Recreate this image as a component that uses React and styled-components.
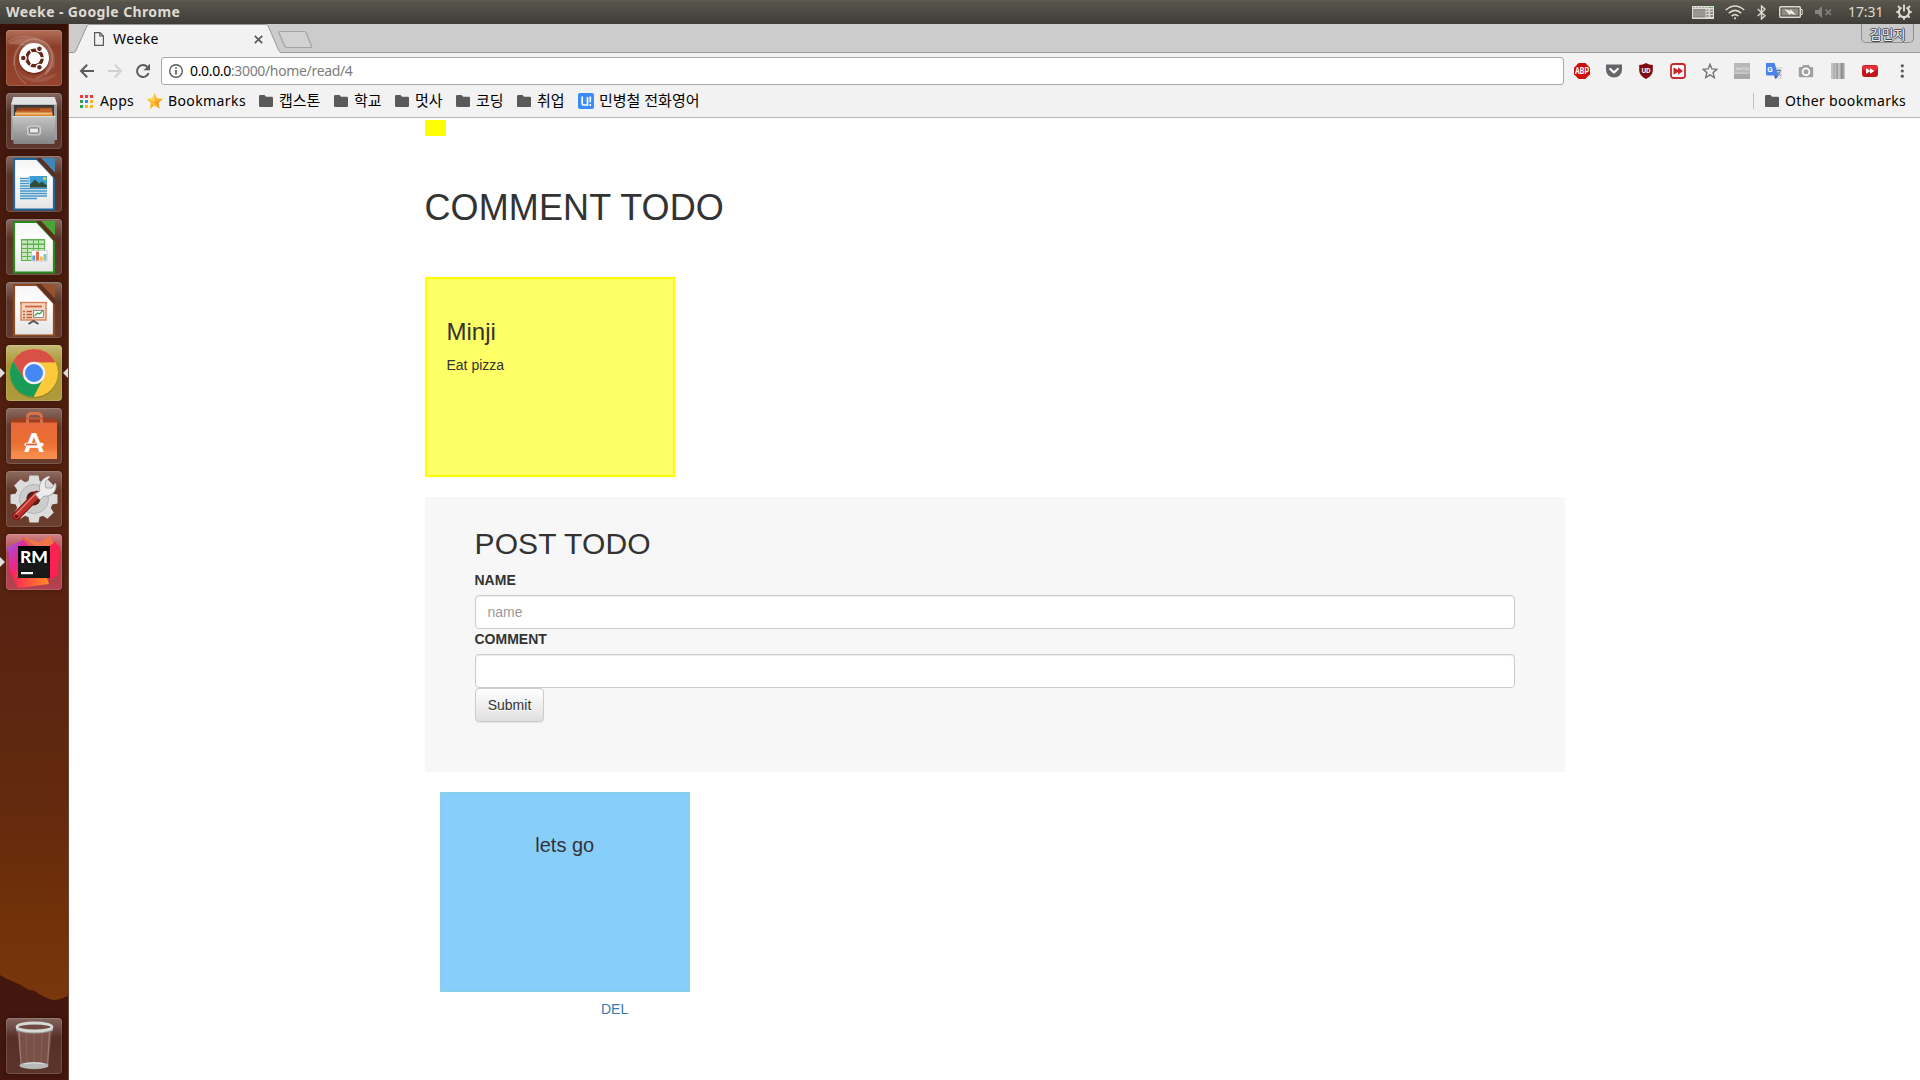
import React from "react";
import styled, { createGlobalStyle } from "styled-components";

const UI = `"Noto Sans", "Noto Sans CJK KR", sans-serif`;
const BODY = `"Liberation Sans", "Noto Sans CJK KR", sans-serif`;

const GlobalStyle = createGlobalStyle`
  *, *::before, *::after { box-sizing: border-box; }
  html, body { margin: 0; padding: 0; overflow: hidden; background: #fff; }
  svg { display: block; flex: none; }
`;

/* ---------- Desktop frame ---------- */

const Desktop = styled.div`
  display: flex;
  flex-direction: column;
  width: 1920px;
  height: 1080px;
  overflow: hidden;
  font-family: ${UI};
`;

const MenuBar = styled.header`
  display: flex;
  align-items: center;
  justify-content: space-between;
  flex: none;
  height: 24px;
  padding: 0 8px 0 6px;
  background: linear-gradient(#5f5d50 0, #56544b 12%, #3e3d38 100%);
  color: #dfdbd2;
`;

const WindowTitle = styled.span`
  font-size: 14px;
  font-weight: 700;
  line-height: 24px;
  letter-spacing: 0.38px;
  white-space: nowrap;
`;

const Indicators = styled.div`
  display: flex;
  align-items: center;
`;

const Indicator = styled.span`
  display: flex;
  justify-content: center;
  width: ${(p) => p.$w}px;
  margin-right: ${(p) => p.$after || 0}px;
`;

const Clock = styled.span`
  width: 35px;
  margin-right: 13px;
  font-size: 14px;
  line-height: 24px;
  letter-spacing: -0.1px;
  white-space: nowrap;
`;

const Workspace = styled.div`
  display: flex;
  flex: 1;
  min-height: 0;
`;

/* ---------- Launcher ---------- */

const Launcher = styled.nav`
  position: relative;
  display: flex;
  flex-direction: column;
  gap: 7px;
  flex: none;
  width: 69px;
  padding: 6px 0 6px 6px;
  border-right: 1px solid #6b4434;
  background: linear-gradient(#351109 0, #43190d 3%, #461a0e 15%, #52200f 40%, #5a2411 60%, #642a0f 74%, #703109 84%, #7a370c 93%);
`;

const Hills = styled.svg`
  position: absolute;
  left: 0;
  bottom: 0;
`;

const Tile = styled.div`
  position: relative;
  flex: none;
  width: 56px;
  height: 56px;
  margin-top: ${(p) => (p.$last ? "auto" : "0")};
  border-radius: 4px;
  background: ${(p) =>
    p.$bg || "linear-gradient(rgba(255,255,255,.34), rgba(255,255,255,.1) 35%, rgba(255,255,255,.13))"};
  box-shadow: inset 0 0 0 1px rgba(255, 255, 255, 0.14), 0 0 4px rgba(0, 0, 0, 0.35);
`;

const Pip = styled.i`
  position: absolute;
  top: 23px;
  ${(p) => (p.$right ? "right: -6px;" : "left: -6px;")}
  border: 5px solid transparent;
  ${(p) =>
    p.$right
      ? "border-left-width: 0; border-right-color: #ddd;"
      : "border-right-width: 0; border-left-color: #ddd;"}
`;

/* ---------- Browser chrome ---------- */

const Browser = styled.main`
  display: flex;
  flex-direction: column;
  flex: 1;
  min-width: 0;
  background: #fff;
`;

const TabStrip = styled.div`
  display: flex;
  justify-content: space-between;
  flex: none;
  height: 29px;
  background: linear-gradient(#cccccc 28px, #9c9c9c 28px);
`;

const Tabs = styled.div`
  display: flex;
`;

const Tab = styled.div`
  position: relative;
  display: flex;
  align-items: center;
  width: 209px;
  height: 29px;
  padding: 1px 15px 0 24px;
`;

const TabShape = styled.svg`
  position: absolute;
  left: 0;
  top: 0;
`;

const TabTitle = styled.span`
  position: relative;
  flex: 1;
  padding-left: 8px;
  font-size: 14px;
  line-height: 28px;
  letter-spacing: 0.4px;
  color: #000;
`;

const Above = styled.span`
  position: relative;
  display: flex;
`;

const ProfileBadge = styled.div`
  width: 53px;
  height: 19px;
  margin-right: 6px;
  border: 1px solid #8f8f8f;
  border-top: 0;
  border-radius: 0 0 5px 5px;
  background: #c9c9c9;
  font-family: "Noto Sans CJK KR", sans-serif;
  font-size: 13px;
  line-height: 20px;
  text-align: center;
  color: #f4f4f4;
  text-shadow: 1px 0 #4b4b4b, -1px 0 #4b4b4b, 0 1px #4b4b4b, 0 -1px #4b4b4b;
`;

const Toolbar = styled.div`
  display: flex;
  align-items: center;
  flex: none;
  height: 36px;
  padding: 0 10px;
  background: #f2f2f2;
`;

const NavButtons = styled.div`
  display: flex;
  gap: 12px;
  margin-right: 10px;
`;

const Omnibox = styled.div`
  display: flex;
  align-items: center;
  width: 1403px;
  height: 28px;
  margin-right: 10px;
  padding-left: 6px;
  border: 1px solid #a8a8a8;
  border-radius: 3px;
  background: #fff;
`;

const Address = styled.span`
  padding-left: 6px;
  font-size: 14px;
  line-height: 26px;
  letter-spacing: -0.34px;
  color: #7d7d7d;
  white-space: nowrap;
  b { font-weight: 400; color: #000; }
`;

const Extensions = styled.div`
  display: flex;
  gap: 16px;
`;

const BookmarkBar = styled.div`
  display: flex;
  align-items: center;
  flex: none;
  height: 29px;
  padding: 0 14px 4px 11px;
  border-bottom: 1px solid #b6b6b6;
  background: #f2f2f2;
`;

const Bookmark = styled.div`
  display: flex;
  align-items: center;
  gap: ${(p) => p.$gap || 6}px;
  margin-right: ${(p) => (p.$last ? 0 : 14)}px;
`;

const BookmarkLabel = styled.span`
  width: ${(p) => p.$w}px;
  padding-bottom: ${(p) => (p.$ko ? 2 : 0)}px;
  font-size: ${(p) => (p.$ko ? 15 : 14)}px;
  line-height: 24px;
  letter-spacing: ${(p) => p.$track || 0}px;
  color: #000;
  white-space: nowrap;
`;

const OtherBookmarks = styled.div`
  display: flex;
  align-items: center;
  height: 16px;
  margin-left: auto;
  padding-left: 11px;
  border-left: 1px solid #c2c2c2;
`;

/* ---------- Page ---------- */

const Page = styled.section`
  flex: 1;
  width: 1140px;
  margin-left: 356px;
  padding-top: 2px;
  font-family: ${BODY};
  font-size: 14px;
  line-height: 20px;
  color: #333;
`;

const Marker = styled.div`
  width: 21px;
  height: 16px;
  background: #ff0;
`;

const Title = styled.h1`
  margin: 52px 0 49px -0.5px;
  font-size: 36px;
  font-weight: 400;
  line-height: 40px;
  letter-spacing: 0.12px;
`;

const Note = styled.article`
  width: 250px;
  height: 200px;
  margin-left: ${(p) => (p.$blue ? 15 : 0)}px;
  padding: 40px 20px 40px 19.5px;
  border: 2px solid ${(p) => (p.$blue ? "#87ceeb" : "#ff0")};
  background: ${(p) => (p.$blue ? "#87cefa" : "#ff6")};
  text-align: ${(p) => (p.$blue ? "center" : "left")};
`;

const NoteTitle = styled.h3`
  margin: 0 0 10px;
  font-size: 24px;
  font-weight: 400;
  line-height: 26px;
`;

const NoteText = styled.p`
  margin: 0;
  font-size: ${(p) => (p.$large ? 20 : 14)}px;
  line-height: ${(p) => (p.$large ? 22 : 20)}px;
`;

const PostForm = styled.form`
  display: flex;
  flex-direction: column;
  align-items: flex-start;
  width: 1140px;
  height: 275px;
  margin: 20px 0;
  padding: 30px 50px;
  background: #f7f7f7;
`;

const FormTitle = styled.h2`
  margin: 0 0 10px -0.5px;
  font-size: 30px;
  font-weight: 400;
  line-height: 33px;
  letter-spacing: 0.12px;
`;

const Label = styled.label`
  margin: 0 0 5px -0.5px;
  font-weight: 700;
  line-height: 20px;
`;

const Field = styled.input`
  width: 1040px;
  height: 34px;
  padding: 6px 12px 6px 11.5px;
  border: 1px solid #ccc;
  border-radius: 4px;
  background: #fff;
  box-shadow: inset 0 1px 1px rgba(0, 0, 0, 0.075);
  font: 14px/20px ${BODY};
  color: #555;
  &::placeholder { color: #999; opacity: 1; }
`;

const Submit = styled.button`
  height: 34px;
  width: 69px;
  padding: 6px 0;
  border: 1px solid #ccc;
  border-radius: 4px;
  background: linear-gradient(#fff, #e0e0e0);
  box-shadow: inset 0 1px 0 rgba(255, 255, 255, 0.15), 0 1px 1px rgba(0, 0, 0, 0.075);
  font: 14px/20px ${BODY};
  color: #333;
  text-shadow: 0 1px 0 #fff;
`;

const DeleteLink = styled.a`
  display: block;
  margin: 7px 0 0 176px;
  color: #337ab7;
`;

/* ---------- Launcher drawings ---------- */

const Art = (props) => <svg width="56" height="56" viewBox="0 0 56 56" {...props} />;

const UbuntuArt = () => (
  <Art>
    <g fill="none" stroke="#fff" strokeOpacity=".2" strokeWidth="1.200">
      <path d="M2 12C16 2 42 6 46 24c2 12-4 20-16 24" />
      <path d="M8 36C6 14 24 4 38 12c8 5 12 14 9 26" />
      <path d="M20 54C4 42 6 22 18 14" />
    </g>
    <path d="M2 14C16 3 44 6 47 26c1 10-2 16-8 20 4-18-8-32-37-32z" fill="#fff" opacity=".16" />
    <path d="M8 30c2 16 16 24 44 13-12 14-40 14-44-13z" fill="#fff" opacity=".1" />
    <circle cx="28" cy="29" r="15.500" fill="#3a0e05" opacity=".4" />
    <circle cx="28" cy="28" r="15" fill="#fff" />
    <circle cx="28.500" cy="28" r="7.700" fill="none" stroke="#64281c" strokeWidth="3.400" />
    <g stroke="#fff" strokeWidth="1.300">
      <path d="M28.500 28l-4.500 8M28.500 28l-4.500-8M28.500 28h9.500" />
      <circle cx="17.300" cy="28" r="2.900" fill="#64281c" />
      <circle cx="33.400" cy="18.800" r="2.900" fill="#64281c" />
      <circle cx="33.400" cy="37.200" r="2.900" fill="#64281c" />
    </g>
    <circle cx="28.500" cy="28" r="6" fill="#fff" />
  </Art>
);

const FilesArt = () => (
  <Art>
    <defs>
      <linearGradient id="cab" x2="0" y2="1">
        <stop stopColor="#c4c4c4" />
        <stop offset="1" stopColor="#858585" />
      </linearGradient>
    </defs>
    <path d="M7 4h42l2 8v35H5V12z" fill="#9c9c9c" />
    <path d="M7.500 4h41l2.500 7.500H5z" fill="#e2e2e2" />
    <path d="M8 12h40v12H8z" fill="#3a3a3a" />
    <path d="M11 14.500h35v9H10z" fill="#96431b" />
    <path d="M10 17.500h23l2-2h11l1 8H9z" fill="#c2642a" />
    <path d="M9 19.500h37v4H9z" fill="#eebb78" />
    <path d="M9 21.500h38v2H9z" fill="#d98534" />
    <path d="M6.500 23.500h43L48.500 51H7.500z" fill="url(#cab)" />
    <path d="M6.500 23.500h43" stroke="#ddd" />
    <rect x="21.500" y="33" width="13" height="9" rx="2" fill="#b5b5b5" stroke="#d0d0d0" />
    <rect x="23.500" y="35" width="9" height="5" rx="1" fill="#ececec" stroke="#777" />
  </Art>
);

const OfficeArt = ({ id, color, fold, children }) => (
  <Art>
    <defs>
      <linearGradient id={id} x2="0" y2="1">
        <stop stopColor="#f4f4f4" />
        <stop offset=".35" stopColor="#fff" />
        <stop offset="1" stopColor="#e4e4e4" />
      </linearGradient>
    </defs>
    <path d="M8 3h23L48 21v32.500H8z" fill={`url(#${id})`} stroke={color} strokeWidth="2.200" />
    <path d="M30 2h6L49 17v6z" fill="#5c2f1e" />
    <path d="M35 2h14v14.500z" fill={fold} />
    {children}
  </Art>
);

const WriterArt = () => (
  <OfficeArt id="docW" color="#1d679c" fold="#3d86b5">
    <path d="M14 22.500h9M14 25h9M14 27.500h9M14 30h9M14 32.500h27M14 35h27M14 37.500h27M14 40h27M14 42.500h17" stroke="#4596c7" strokeWidth="1.500" />
    <rect x="23.500" y="20" width="17.500" height="11.500" fill="#3c9ed4" />
    <path d="M24 31.500v-3l5-5 4 4 3-2 5 4v2z" fill="#304e3b" />
    <circle cx="38.500" cy="22.500" r="1.500" fill="#f3d335" />
  </OfficeArt>
);

const CalcArt = () => (
  <OfficeArt id="docC" color="#258b1a" fold="#49a536">
    <path d="M15 20h24v22H15z" fill="#5cb448" />
    <path d="M16 21.500h5v3h-5zm6 0h5v3h-5zm6 0h4v3h-4zm5 0h5v3h-5zM16 26h5v3h-5zm6 0h5v3h-5zm6 0h4v3h-4zm5 0h5v3h-5zM16 30h5v3h-5zm6 0h5v3h-5zm6 0h4v3h-4zm5 0h5v3h-5zM16 34h5v3h-5zm6 0h5v3h-5zM16 38h5v3h-5zm6 0h5v3h-5z" fill="#c6e8bc" />
    <path d="M25.500 31.500h15.500V42H25.500z" fill="#fff" stroke="#bbb" strokeWidth=".6" />
    <path d="M26.300 36.500h3v5h-3z" fill="#5aa2d4" />
    <path d="M30 32.500h3v9h-3z" fill="#e06d48" />
    <path d="M33.800 37.500h3v4h-3z" fill="#efb95a" />
    <path d="M37.500 35h3v6.500h-3z" fill="#86c6c0" />
  </OfficeArt>
);

const ImpressArt = () => (
  <OfficeArt id="docI" color="#8e4822" fold="#96522e">
    <path d="M14 20h27v2H14z" fill="#c96a3f" />
    <rect x="15" y="20.500" width="25" height="17.500" fill="#f6d3be" stroke="#d5805a" strokeWidth="1.400" />
    <path d="M19 24.500h17" stroke="#c96a3f" strokeWidth="1.800" />
    <path d="M17 29.500h2m1.500 0H26M17 32.500h2m1.500 0H26M17 35.500h2m1.500 0H26" stroke="#b95f38" strokeWidth="1.500" />
    <rect x="27.500" y="28.500" width="10" height="7" fill="#fff" stroke="#777" strokeWidth=".8" />
    <path d="M28.500 34l3-3 2 1 3-3" fill="none" stroke="#3fa34b" strokeWidth="1.300" />
    <path d="M22.500 42l5-3 5 3" fill="none" stroke="#555" strokeWidth="2" />
  </OfficeArt>
);

const ChromeArt = () => (
  <Art>
    <circle cx="28" cy="29" r="24" fill="#3c3110" opacity=".35" />
    <circle cx="28" cy="28" r="24" fill="#fbc939" />
    <path d="M7.200 16A24 24 0 0 1 48.800 16L49 17H28L17.500 34z" fill="#d95146" />
    <path d="M7.200 16L18 34l10 5 9-5-9.500 18A24 24 0 0 1 7.200 16z" fill="#189c58" />
    <path d="M28 17.500h21" stroke="#b64126" opacity=".3" />
    <circle cx="28" cy="28" r="11.200" fill="#f2f2f2" />
    <circle cx="28" cy="28" r="9" fill="#4587f3" />
  </Art>
);

const StoreArt = () => (
  <Art>
    <defs>
      <linearGradient id="bag" x2="0" y2="1">
        <stop stopColor="#e8683a" />
        <stop offset=".55" stopColor="#ea6f32" />
        <stop offset="1" stopColor="#f58948" />
      </linearGradient>
    </defs>
    <path d="M6.500 10.500h43.500l1 4.500H5z" fill="#9c3e1f" />
    <path d="M5 14.500h46V51H5z" fill="url(#bag)" />
    <path d="M5 43h46v8H5z" fill="#fb9a5d" opacity=".35" />
    <path d="M21.500 18v-8.500q0-4 4-4h6q4 0 4 4V18" fill="none" stroke="#d9714a" strokeWidth="3" />
    <path d="M20 10.500h17" stroke="#c05a38" strokeWidth="2" />
    <text x="28" y="43.500" textAnchor="middle" fontFamily="Lato, sans-serif" fontSize="27" fontWeight="900" fill="#fff">A</text>
    <rect x="18.500" y="34.800" width="19" height="3.400" rx="1.500" fill="#fff" />
    <path d="M20 36.500h11" stroke="#e66332" strokeWidth="1.800" />
  </Art>
);

const SettingsArt = () => (
  <Art>
    <g fill="#dcdcdc">
      {[0, 45, 90, 135].map((a) => (
        <path key={a} d="M23.500 4.500h9l1.500 8v31l-1.500 8h-9l-1.500-8v-31z" transform={`rotate(${a} 28 28)`} />
      ))}
      <circle cx="28" cy="28" r="19" />
    </g>
    <circle cx="28" cy="28" r="14.500" fill="#cdcdcd" stroke="#b4b4b4" />
    <circle cx="27.500" cy="27.500" r="7" fill="#4d2318" />
    <path d="M10.500 45L31 24" stroke="#7f1815" strokeWidth="8.500" strokeLinecap="round" />
    <path d="M10.500 45L31 24" stroke="#bd322c" strokeWidth="6.200" strokeLinecap="round" />
    <path d="M10.500 42.500L29 23.500" stroke="#e58279" strokeWidth="1.300" strokeLinecap="round" />
    <circle cx="10.500" cy="45.500" r="1.600" fill="#5f100e" />
    <path d="M29 23l5-3c-2-7 2-13 9-15l1 1-5 5 1 6 6 0 3-5 1 1c1 8-5 13-12 12l-4 4z" fill="#ececec" stroke="#999" strokeWidth=".8" />
  </Art>
);

const RubyMineArt = () => (
  <Art>
    <defs>
      <linearGradient id="rmA" x2="1" y2="1">
        <stop stopColor="#8a5bff" />
        <stop offset=".45" stopColor="#e8288a" />
        <stop offset="1" stopColor="#ff2a51" />
      </linearGradient>
      <linearGradient id="rmB" x2="1">
        <stop stopColor="#fc1f5c" />
        <stop offset="1" stopColor="#ff8c22" />
      </linearGradient>
    </defs>
    <path d="M17 3l16 5 12-6 4 12-10 8-27-8z" fill="#f0764a" />
    <path d="M17 3l12 9H13z" fill="#e05c60" />
    <path d="M2 13l15-7 6 6-9 32-10-5z" fill="url(#rmA)" />
    <path d="M40 14l9-6 5 5-3 29-11 4z" fill="#fc2354" />
    <path d="M4 38l9-2 28 8 2 6-31 4z" fill="url(#rmB)" />
    <rect x="12" y="12" width="32" height="32" fill="#000" />
    <path d="M12 28h32v16H12z" fill="#191919" />
    <text x="14" y="28.500" fontFamily="Lato, sans-serif" fontSize="17.500" fontWeight="900" textLength="28" lengthAdjust="spacingAndGlyphs" fill="#fff">RM</text>
    <path d="M15 38h12v2.200H15z" fill="#fff" />
  </Art>
);

const TrashArt = () => (
  <Art>
    <path d="M11 12h35l-4 37q-14 5-27 0z" fill="#9b7167" opacity=".5" />
    <path d="M13 14l2 33M43.500 14l-2 33" stroke="#ddc8c2" strokeWidth="1.200" opacity=".35" />
    <path d="M20 15l1 31M28 16v30M36 15l-1 31" stroke="#ddc8c2" strokeWidth=".7" opacity=".2" />
    <path d="M10 10v3q18 5 37 0v-3z" fill="#999" />
    <ellipse cx="28.500" cy="9" rx="17.500" ry="4" fill="#6e4a40" stroke="#d6d9d6" strokeWidth="2.800" />
    <ellipse cx="28" cy="47.500" rx="14.500" ry="3.600" fill="#b5b9b7" />
    <path d="M18 46q10-2.500 20 0" stroke="#ddd" fill="none" />
  </Art>
);

const LAUNCHER = [
  { id: "dash", Icon: UbuntuArt, bg: "linear-gradient(#b5705a, #8b3e28 30%, #96452f)" },
  { id: "files", Icon: FilesArt },
  { id: "writer", Icon: WriterArt },
  { id: "calc", Icon: CalcArt },
  { id: "impress", Icon: ImpressArt },
  { id: "chrome", Icon: ChromeArt, bg: "linear-gradient(#c6bb78, #a8942f 35%, #b09b3d)", open: true, focused: true },
  { id: "store", Icon: StoreArt },
  { id: "settings", Icon: SettingsArt },
  { id: "rubymine", Icon: RubyMineArt, bg: "linear-gradient(#cf8489, #b13c47 35%, #b14250)", open: true },
];

/* ---------- Small icons ---------- */

const Icon16 = (props) => <svg width="16" height="16" viewBox="0 0 16 16" {...props} />;

const Folder = () => (
  <svg width="14" height="12" viewBox="0 0 14 12">
    <path d="M1.200 0H5.500L7 1.700h5.800q1.200 0 1.200 1.200v7.900q0 1.200-1.200 1.200H1.200Q0 12 0 10.800V1.200Q0 0 1.200 0z" fill="#5a5a5a" />
  </svg>
);

const AppsGrid = () => {
  const colors = ["#f03a3a", "#f03a3a", "#f03a3a", "#2f9e58", "#2f87f0", "#f8b61c", "#2f9e58", "#f8b61c", "#f8b61c"];
  return (
    <svg width="13" height="13" viewBox="0 0 13 13">
      {colors.map((c, i) => (
        <rect key={i} x={(i % 3) * 5} y={Math.floor(i / 3) * 5} width="3" height="3" fill={c} />
      ))}
    </svg>
  );
};

const Star = () => (
  <Icon16>
    <path d="M7.600 0l2.300 5.300 6 .5-4.500 4 1.200 6-5-3.200L2.800 16l1-6L0 6l5.400-.8z" fill="#fbb829" />
    <path d="M7.600 0v9L0 6l5.400-.8z" fill="#ffd65c" />
    <path d="M15.900 5.800L7.600 9l5 6.800-1.200-6z" fill="#f39a1d" />
  </Icon16>
);

const LessonMark = () => (
  <Icon16>
    <rect width="16" height="16" rx="2" fill="#3b8bfb" />
    <path d="M4.200 3.500V10.500q0 1.500 1.500 1.500H9.500V4" fill="none" stroke="#fff" strokeWidth="1.700" />
    <path d="M12.300 3.500v5.700M12.300 11v2" stroke="#fff" strokeWidth="1.600" />
  </Icon16>
);

const BOOKMARKS = [
  { label: "캡스톤", w: 41 },
  { label: "학교", w: 27 },
  { label: "멋사", w: 27 },
  { label: "코딩", w: 27 },
  { label: "취업", w: 27 },
];

const StatusIcons = () => (
  <Indicators>
    <Indicator $w={22} $after={11}>
      <svg width="22" height="13" viewBox="0 0 22 13">
        <rect width="22" height="13" fill="#dedcd6" />
        <path d="M1 1.500h20" stroke="#aaa8a2" strokeDasharray="2 1" />
        <rect x="1" y="3" width="12.500" height="8.500" fill="#8d8b86" />
        <path d="M1.500 5h12M1.500 7h12M1.500 9h12" stroke="#c8c6c0" strokeWidth=".8" strokeDasharray="1 1" />
        <path d="M14.500 3.500h2v7.500h-2zM18 3.500h3v7.500h-3z" fill="#8d8b86" />
        <path d="M14 5.500h7M14 8.500h7" stroke="#d5d3cd" />
        <path d="M18 1h3v1h-3z" fill="#67c15b" />
      </svg>
    </Indicator>
    <Indicator $w={20} $after={12}>
      <svg width="20" height="15" viewBox="0 0 20 15" fill="none" stroke="#dfdbd2" strokeWidth="1.600">
        <path d="M.8 5Q10-3 19.200 5M3.800 8.200Q10 2.500 16.200 8.200M6.600 11.200Q10 8 13.400 11.200" />
        <circle cx="10" cy="13.300" r="1.100" fill="#dfdbd2" stroke="none" />
      </svg>
    </Indicator>
    <Indicator $w={9} $after={13}>
      <svg width="9" height="15" viewBox="0 0 9 15" fill="none" stroke="#dfdbd2" strokeWidth="1.400">
        <path d="M.7 4L8 10.700 4.500 14V1L8 4.300.7 11" />
      </svg>
    </Indicator>
    <Indicator $w={24} $after={12}>
      <svg width="24" height="12" viewBox="0 0 24 12">
        <rect x=".75" y=".75" width="20.500" height="10.500" rx="1" fill="none" stroke="#dfdbd2" strokeWidth="1.500" />
        <rect x="2.500" y="2.500" width="17" height="7" fill="#8f8c85" />
        <path d="M22 3.500h1.200v5H22" fill="none" stroke="#dfdbd2" />
        <path d="M5.500 3L11.500 5V3l5.500 6-6-1.500v2z" fill="#f1eee8" />
      </svg>
    </Indicator>
    <Indicator $w={17} $after={16}>
      <svg width="17" height="12" viewBox="0 0 17 12">
        <path d="M0 4h3l4-4v12L3 8H0z" fill="#85837c" />
        <path d="M10.500 3.500l5.500 5.500M16 3.500L10.500 9" stroke="#85837c" strokeWidth="1.500" />
      </svg>
    </Indicator>
    <Clock>17:31</Clock>
    <Indicator $w={16}>
      <Icon16 fill="none" stroke="#dfdbd2">
        <path d="M5.500 3.400a5.200 5.200 0 1 0 5 0" strokeWidth="2.100" />
        <path d="M8 .5v7" strokeWidth="1.900" />
        <path d="M3.600 3.600L2 2M12.400 3.600L14 2M3 8H.3M13 8h2.700M4.300 11.700l-1.900 1.900M11.700 11.700l1.900 1.900M8 13v2.700" strokeWidth="2" />
      </Icon16>
    </Indicator>
  </Indicators>
);

const ExtensionIcons = () => (
  <Extensions>
    <Icon16>
      <path d="M4.700 0h6.600L16 4.700v6.600L11.300 16H4.700L0 11.300V4.700z" fill="#d00c08" />
      <text x="8" y="11.200" textAnchor="middle" fontFamily="Roboto, sans-serif" fontWeight="700" fontSize="9" textLength="14" lengthAdjust="spacingAndGlyphs" fill="#fff">ABP</text>
    </Icon16>
    <Icon16>
      <path d="M0 1.500h16V7a8 7.500 0 0 1-16 0z" fill="#66666a" />
      <path d="M4.200 6L8 9.500 11.800 6" fill="none" stroke="#fff" strokeWidth="2.200" strokeLinecap="round" strokeLinejoin="round" />
    </Icon16>
    <Icon16>
      <path d="M8 0q3 2 6.800 2v5.500Q14.500 13 8 16 1.500 13 1.200 7.500V2Q5 2 8 0z" fill="#800a10" />
      <text x="8" y="9.800" textAnchor="middle" fontFamily="Roboto, sans-serif" fontWeight="700" fontSize="7" fill="#fff">UD</text>
    </Icon16>
    <Icon16>
      <rect x="1" y="1" width="14" height="14" rx="2.500" fill="#fff" stroke="#c9282d" strokeWidth="1.800" />
      <path d="M3.500 4.300L8 7V4.300L13 8l-5 3.700V9l-4.500 2.700z" fill="#cf2329" />
    </Icon16>
    <Icon16>
      <path d="M8 1.200l1.900 4.700 5.100.4-3.900 3.300 1.200 5L8 11.900l-4.300 2.700 1.200-5L1 6.300l5.100-.4z" fill="none" stroke="#757575" strokeWidth="1.400" />
    </Icon16>
    <Icon16>
      <rect width="16" height="16" fill="#b8b8b8" />
      <rect y="11" width="16" height="5" fill="#a8a8a8" />
      <text x="1" y="7" fontFamily="DejaVu Sans Mono, monospace" fontSize="4.200" textLength="14" fill="#eee">Tooltip</text>
      <text x="1" y="11" fontFamily="DejaVu Sans Mono, monospace" fontSize="3" textLength="14" fill="#ddd">Dictionary</text>
    </Icon16>
    <Icon16>
      <path d="M6 4h10v12H9z" fill="#dedede" />
      <path d="M0 0h8.500l4 12.500H1.500Q0 12.500 0 11z" fill="#4a82ec" />
      <path d="M8 12.500h4.500L9.500 16z" fill="#3059b5" />
      <text x="1.300" y="9.200" fontFamily="Roboto, sans-serif" fontWeight="700" fontSize="8" fill="#fff">G</text>
      <path d="M10.500 7.500H15M12.700 6.300v1.200M14.300 7.500Q13.500 11 11.500 12M11.700 9q1 2.500 3 3.500" stroke="#607f8d" fill="none" />
    </Icon16>
    <Icon16>
      <path d="M5 2h6l1 2h2q1.200 0 1.200 1.200V13q0 1.200-1.200 1.200H2Q.8 14.200.8 13V5.200Q.8 4 2 4h2z" fill="#a0a0a0" />
      <circle cx="8" cy="8.800" r="3.400" fill="none" stroke="#fff" strokeWidth="1.800" />
    </Icon16>
    <Icon16>
      <rect x="1" width="14" height="16" fill="#c4c4c4" />
      <path d="M3 0h2v16H3z" fill="#b0b0b0" />
      <path d="M6 0h2v16H6z" fill="#a2a2a2" />
      <path d="M10.500 0h3v16h-3z" fill="#909090" />
    </Icon16>
    <Icon16>
      <rect y="2" width="16" height="12" rx="3" fill="#bf151b" />
      <rect x=".5" y="2.500" width="15" height="5" rx="2.500" fill="#e52f38" />
      <path d="M4 5.300L8 7.500V5.300L12.500 8 8 10.700V8.500l-4 2.200z" fill="#fff" />
    </Icon16>
    <Icon16 fill="#5a5a5a">
      <circle cx="8.300" cy="2.800" r="1.600" />
      <circle cx="8.300" cy="8" r="1.600" />
      <circle cx="8.300" cy="13.200" r="1.600" />
    </Icon16>
  </Extensions>
);

export default function App() {
  return (
    <Desktop>
      <GlobalStyle />
      <MenuBar>
        <WindowTitle>Weeke - Google Chrome</WindowTitle>
        <StatusIcons />
      </MenuBar>

      <Workspace>
        <Launcher>
          <Hills width="68" height="106" viewBox="0 0 68 106">
            <path d="M0 1Q6 5 12 7q10 4 17 9 6 0 10 4 10 6 16 6 7-1 13-4v84H0z" fill="#43170d" />
          </Hills>
          {LAUNCHER.map(({ id, Icon, bg, open, focused }) => (
            <Tile key={id} $bg={bg}>
              <Icon />
              {open && <Pip />}
              {focused && <Pip $right />}
            </Tile>
          ))}
          <Tile $last>
            <TrashArt />
          </Tile>
        </Launcher>

        <Browser>
          <TabStrip>
            <Tabs>
              <Tab>
                <TabShape width="214" height="29" viewBox="0 0 214 29">
                  <path d="M4 29l2.500-1.500L18 2Q19 .5 20.500.5h176q2 0 2.700 1.500l10.800 25 3 2z" fill="#f2f2f2" />
                  <path d="M0 28.500h4.500q1.500 0 2.200-1.500L18 2Q18.800.5 20.500.5h176q2 0 2.700 1.500l10.500 24.500q.8 2 2.500 2H214" fill="none" stroke="#999" />
                </TabShape>
                <Above>
                  <svg width="12" height="14" viewBox="0 0 12 14" fill="none" stroke="#5a5a5a" strokeWidth="1.200">
                    <path d="M1.600.6h5.300L10.400 4v9.400H1.600zM6.800.8V4h3.500" />
                  </svg>
                </Above>
                <TabTitle>Weeke</TabTitle>
                <Above>
                  <svg width="9" height="9" viewBox="0 0 9 9" stroke="#5a5a5a" strokeWidth="1.700">
                    <path d="M.8.8l7.400 7.400M8.200.8L.8 8.200" />
                  </svg>
                </Above>
              </Tab>
              <svg width="36" height="29" viewBox="0 0 36 29">
                <path d="M2 7.500h24q1.700 0 2.300 1.500l5.200 13q.8 1.500-1 1.500H9q-1.700 0-2.300-1.500L1 9q-.5-1.500 1-1.500z" fill="#d2d2d2" stroke="#a3a3a3" strokeWidth="1.200" />
              </svg>
            </Tabs>
            <ProfileBadge>김민지</ProfileBadge>
          </TabStrip>

          <Toolbar>
            <NavButtons>
              <Icon16 fill="none" stroke="#5a5a5a" strokeWidth="2">
                <path d="M15 8H2.500M8.200 1.800L2 8l6.200 6.200" />
              </Icon16>
              <Icon16 fill="none" stroke="#d2d2d2" strokeWidth="2">
                <path d="M1 8h12.500M7.800 1.800L14 8l-6.200 6.200" />
              </Icon16>
              <Icon16>
                <path d="M13.600 10.200A6 6 0 1 1 12.400 3.900" fill="none" stroke="#5a5a5a" strokeWidth="2" />
                <path d="M15 .8v6.400H8.600z" fill="#5a5a5a" />
              </Icon16>
            </NavButtons>
            <Omnibox>
              <Icon16 fill="none" stroke="#5a5a5a">
                <circle cx="8" cy="8" r="6.300" strokeWidth="1.400" />
                <path d="M8 7v4.500M8 4.300v1.500" strokeWidth="1.700" />
              </Icon16>
              <Address>
                <b>0.0.0.0</b>:3000/home/read/4
              </Address>
            </Omnibox>
            <ExtensionIcons />
          </Toolbar>

          <BookmarkBar>
            <Bookmark $gap={7}>
              <AppsGrid />
              <BookmarkLabel $w={33} $track={0.3}>Apps</BookmarkLabel>
            </Bookmark>
            <Bookmark $gap={5}>
              <Star />
              <BookmarkLabel $w={77} $track={0.4}>Bookmarks</BookmarkLabel>
            </Bookmark>
            {BOOKMARKS.map((b) => (
              <Bookmark key={b.label}>
                <Folder />
                <BookmarkLabel $ko $w={b.w}>{b.label}</BookmarkLabel>
              </Bookmark>
            ))}
            <Bookmark $gap={5}>
              <LessonMark />
              <BookmarkLabel $ko $w={101}>민병철 전화영어</BookmarkLabel>
            </Bookmark>
            <OtherBookmarks>
              <Bookmark $last>
                <Folder />
                <BookmarkLabel $w={121} $track={0.35}>Other bookmarks</BookmarkLabel>
              </Bookmark>
            </OtherBookmarks>
          </BookmarkBar>

          <Page>
            <Marker />
            <Title>COMMENT TODO</Title>
            <Note>
              <NoteTitle>Minji</NoteTitle>
              <NoteText>Eat pizza</NoteText>
            </Note>
            <PostForm>
              <FormTitle>POST TODO</FormTitle>
              <Label>NAME</Label>
              <Field placeholder="name" />
              <Label>COMMENT</Label>
              <Field />
              <Submit type="button">Submit</Submit>
            </PostForm>
            <Note $blue>
              <NoteText $large>lets go</NoteText>
            </Note>
            <DeleteLink>DEL</DeleteLink>
          </Page>
        </Browser>
      </Workspace>
    </Desktop>
  );
}
